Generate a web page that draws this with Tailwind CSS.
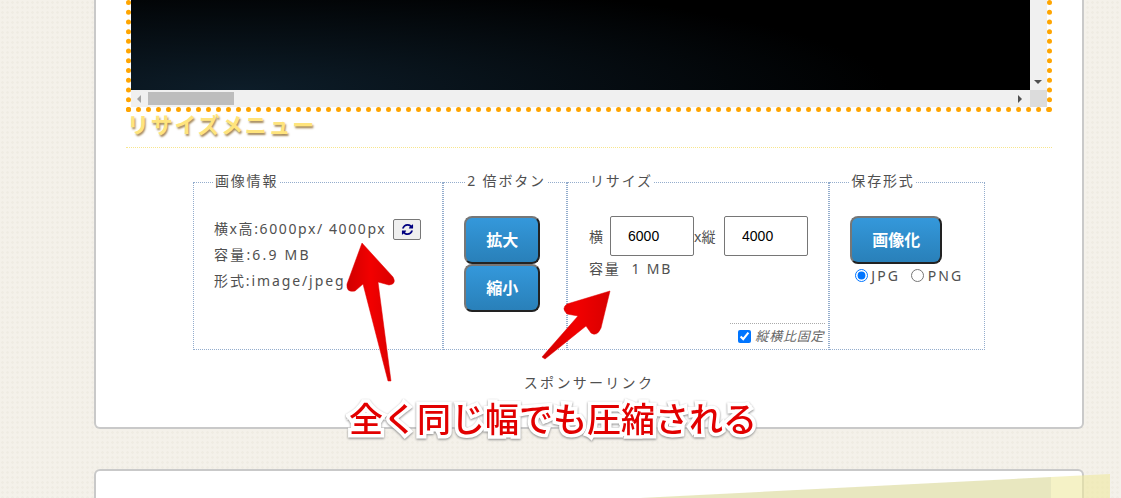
<!DOCTYPE html>
<html lang="ja">
<head>
<meta charset="utf-8">
<script src="https://cdn.jsdelivr.net/npm/@tailwindcss/browser@4"></script>
</head>
<body class="relative h-[498px] w-[1121px] overflow-hidden bg-[#f4f1ea] bg-[radial-gradient(#efece3_1px,transparent_1.5px)] bg-[length:5px_5px] font-['Noto_Sans','Noto_Sans_CJK_JP',sans-serif] text-[14px] text-[#505050]">
  <main class="ml-[94px] flex w-[990px] flex-col gap-[40px]">
    <section class="h-[429px] rounded-b-md border-2 border-t-0 border-[#c9c9c9] bg-white pl-[30px] pr-[30px]">
      <div class="h-[112px] w-[926px] border-[5px] border-t-0 border-dotted border-[#ffa500]">
        <div class="flex h-[107px] flex-col">
          <div class="flex h-[90px]">
            <div class="flex-1 bg-[radial-gradient(ellipse_650px_110px_at_12%_100%,#0d1d29,#000)]"></div>
            <div class="relative w-[17px] bg-[#f0f0f0]">
              <span class="absolute bottom-[6px] left-[4px] h-0 w-0 border-x-[4px] border-t-[4px] border-x-transparent border-t-[#505050]"></span>
            </div>
          </div>
          <div class="flex h-[17px] items-center bg-[#f0f0f0]">
            <span class="ml-[6px] h-0 w-0 border-y-[4px] border-r-[4px] border-y-transparent border-r-[#a3a3a3]"></span>
            <span class="ml-[7px] h-[13px] w-[86px] bg-[#bdbdbd]"></span>
            <span class="ml-auto mr-[4px] h-0 w-0 border-y-[4px] border-l-[4px] border-y-transparent border-l-[#505050]"></span>
            <span class="mr-0 ml-[4px] h-[17px] w-[17px] bg-[#dcdcdc]"></span>
          </div>
        </div>
      </div>
      <h2 class="h-[36px] w-[926px] border-b border-dotted border-[#f7e68e] pl-[1px] text-[22px] leading-[25px] font-bold tracking-[1.7px] text-[#ffe47c] [text-shadow:1px_2px_2px_#a5895a]">リサイズメニュー</h2>
      <div class="mt-[25px] ml-[67px] flex h-[177px] w-[792px] tracking-[1.6px]">
        <fieldset class="h-[177px] w-[251px] border border-dotted border-[#94adcd] pl-[20px]">
          <legend class="relative -top-[2px] px-[1px] leading-[19px] tracking-[1.8px]">画像情報</legend>
          <div class="mt-[24px] flex items-center leading-[26px]">
            <span>横x高:6000px/ 4000px</span>
            <button class="ml-[7px] flex h-[21px] w-[28px] items-center justify-center rounded-[2px] border border-[#777] bg-[#efefef]">
              <svg viewBox="0 0 1792 1792" class="h-[13px] w-[13px]" fill="#000080"><path d="M1639 1056q0 5-1 7-64 268-268 434.5t-478 166.5q-146 0-282.5-55t-243.5-157l-129 129q-19 19-45 19t-45-19-19-45v-448q0-26 19-45t45-19h448q26 0 45 19t19 45-19 45l-137 137q71 66 161 102t187 36q134 0 250-65t186-179q11-17 53-117 8-23 30-23h192q13 0 22.5 9.5t9.5 22.5zm25-800v448q0 26-19 45t-45 19h-448q-26 0-45-19t-19-45 19-45l138-138q-148-137-349-137-134 0-250 65t-186 179q-11 17-53 117-8 23-30 23h-199q-13 0-22.5-9.5t-9.5-22.5v-7q65-268 270-434.5t480-166.5q146 0 284 55.5t245 156.5l130-129q19-19 45-19t45 19 19 45z"/></svg>
            </button>
          </div>
          <p class="leading-[26px] tracking-[2.2px]">容量:6.9 MB</p>
          <p class="leading-[26px] tracking-[1.9px]">形式:image/jpeg</p>
        </fieldset>
        <fieldset class="h-[177px] w-[124px] border border-dotted border-[#94adcd] pl-[20px]">
          <legend class="relative -top-[2px] ml-[2px] px-[1px] leading-[19px] tracking-[1.8px]">2 倍ボタン</legend>
          <div class="mt-[24px] flex flex-col">
            <button class="h-[48px] w-[76px] rounded-[8px] border-2 border-[#777] border-r-[#222] border-b-[#222] bg-gradient-to-b from-[#3498db] to-[#2980b9] text-[16px] font-bold tracking-normal text-white">拡大</button>
            <button class="h-[48px] w-[76px] rounded-[8px] border-2 border-[#777] border-r-[#222] border-b-[#222] bg-gradient-to-b from-[#3498db] to-[#2980b9] text-[16px] font-bold tracking-normal text-white">縮小</button>
          </div>
        </fieldset>
        <fieldset class="relative h-[177px] w-[263px] border border-dotted border-[#94adcd] pl-[21px]">
          <legend class="relative -top-[2px] px-[1px] leading-[19px] tracking-[1.8px]">リサイズ</legend>
          <div class="mt-[24px] flex items-center">
            <span class="w-[21px]">横</span>
            <input value="6000" class="h-[40px] w-[84px] rounded-[2px] border border-[#767676] pl-[17px] font-['Liberation_Sans'] text-[14px] tracking-normal text-black">
            <span class="w-[30px] tracking-[0px]">x縦</span>
            <input value="4000" class="h-[40px] w-[84px] rounded-[2px] border border-[#767676] pl-[17px] font-['Liberation_Sans'] text-[14px] tracking-normal text-black">
          </div>
          <p class="mt-[3px] leading-[20px] tracking-[1.8px]">容量 &nbsp;1 MB</p>
          <label class="absolute right-[3px] bottom-0 flex h-[26px] w-[95px] items-center border-t border-dotted border-[#aaa] pl-[8px] text-[13px] tracking-[0.8px] text-[#666] italic">
            <input type="checkbox" checked class="h-[13px] w-[13px] accent-[#0075ff]">
            <span class="ml-[4px]">縦横比固定</span>
          </label>
        </fieldset>
        <fieldset class="h-[177px] w-[156px] border border-dotted border-[#94adcd] pl-[20px]">
          <legend class="relative -top-[2px] px-[1px] leading-[19px] tracking-[1.8px]">保存形式</legend>
          <button class="mt-[24px] h-[48px] w-[92px] rounded-[8px] border-2 border-[#777] border-r-[#222] border-b-[#222] bg-gradient-to-b from-[#3498db] to-[#2980b9] text-[16px] font-bold tracking-normal text-white">画像化</button>
          <div class="ml-[5px] flex h-[22px] items-center tracking-[2px]">
            <input type="radio" name="f" checked class="h-[13px] w-[13px] accent-[#0075ff]">
            <span class="ml-[3px]">JPG</span>
            <input type="radio" name="f" class="ml-[11px] h-[13px] w-[13px]">
            <span class="ml-[4px]">PNG</span>
          </div>
        </fieldset>
      </div>
      <p class="mt-[24px] -ml-[30px] w-[986px] text-center leading-[18px] tracking-[2.3px]">スポンサーリンク</p>
    </section>
    <section class="h-[29px] rounded-t-md border-2 border-b-0 border-[#c9c9c9] bg-white"></section>
  </main>

  <svg class="absolute top-0 left-0" width="1121" height="498" viewBox="0 0 1121 498" fill="none">
    <defs>
      <linearGradient id="r" x1="0" y1="0" x2="1" y2="0"><stop offset="0" stop-color="#d00000"/><stop offset=".5" stop-color="#f20000"/><stop offset="1" stop-color="#d80000"/></linearGradient>
    </defs>
    <path d="M362 243 L393 277 Q397 284 389 285 L378 282 L391 381 L388 381 L363 284 L355 291 Q346 293 347 284 Z" fill="url(#r)" stroke="#e00000" stroke-width="0.5"/>
    <path d="M610 291 L601 328 Q597 337 591 333 L586 326 L545 359 L542 357 L578 316 L567 314 Q561 308 567 304 Z" fill="url(#r)" stroke="#e00000" stroke-width="0.5"/>
    <polygon points="640,498 1051,477 1051,498" fill="#d6d48a" fill-opacity=".55"/>
    <polygon points="1051,477 1110,474 1110,498 1051,498" fill="#efe9a0" fill-opacity=".6"/>
  </svg>
  <div class="absolute top-[398px] left-[349px] text-[34px] leading-[42px] font-medium whitespace-nowrap text-[#e20000] [paint-order:stroke_fill] [-webkit-text-stroke:7px_white] [filter:drop-shadow(0_1px_1px_#888)]">全く同じ幅でも圧縮される</div>
</body>
</html>
